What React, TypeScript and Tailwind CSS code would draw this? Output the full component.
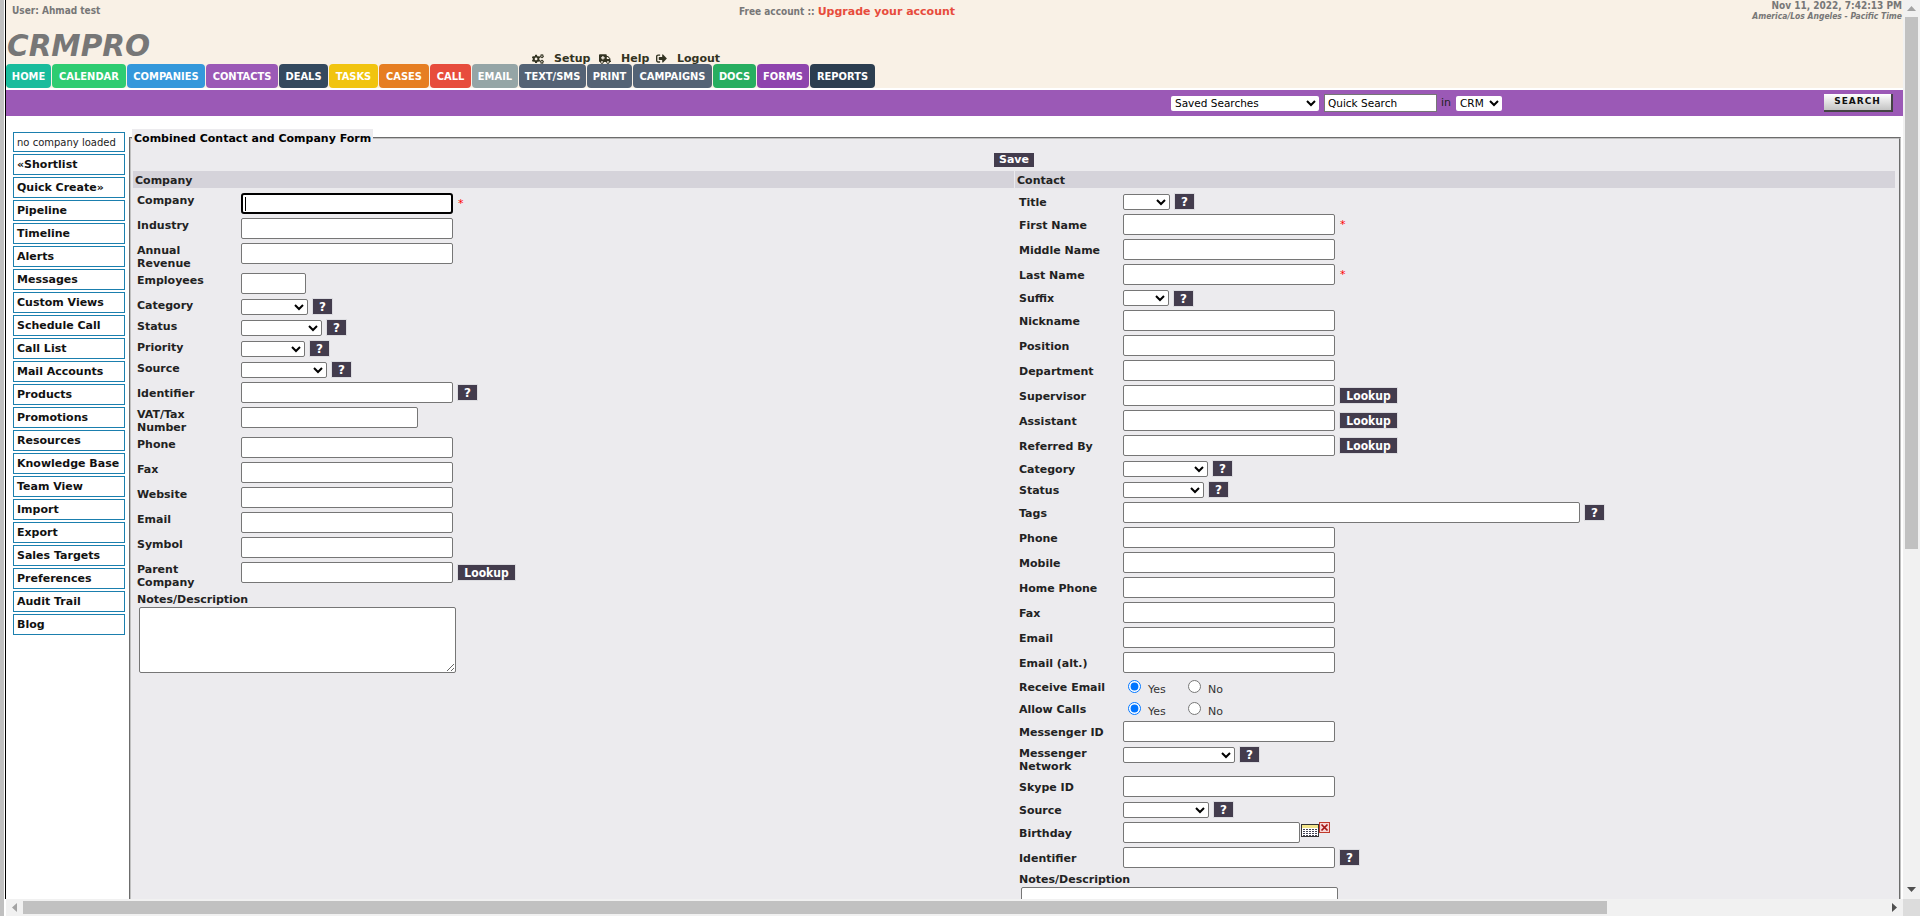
import type { ReactNode } from "react";
import { FaCogs, FaAmbulance, FaSignOutAlt } from "react-icons/fa";

const tabs = [
  { name: "HOME", cls: "w-[45px] bg-[#1abc9c]" },
  { name: "CALENDAR", cls: "w-[74px] bg-[#2ecc71]" },
  { name: "COMPANIES", cls: "w-[78px] bg-[#3498db]" },
  { name: "CONTACTS", cls: "w-[72px] bg-[#9b59b6]" },
  { name: "DEALS", cls: "w-[49px] bg-[#34495e]" },
  { name: "TASKS", cls: "w-[49px] bg-[#f1c40f]" },
  { name: "CASES", cls: "w-[50px] bg-[#e67e22]" },
  { name: "CALL", cls: "w-[41px] bg-[#e74c3c]" },
  { name: "EMAIL", cls: "w-[46px] bg-[#95a5a6]" },
  { name: "TEXT/SMS", cls: "w-[67px] bg-[#546375]" },
  { name: "PRINT", cls: "w-[45px] bg-[#546375]" },
  { name: "CAMPAIGNS", cls: "w-[79px] bg-[#546375]" },
  { name: "DOCS", cls: "w-[43px] bg-[#27ae60]" },
  { name: "FORMS", cls: "w-[52px] bg-[#8e44ad]" },
  { name: "REPORTS", cls: "w-[65px] bg-[#2c3e50]" },
];

const sideItems = [
  "«Shortlist", "Quick Create»", "Pipeline", "Timeline", "Alerts", "Messages", "Custom Views",
  "Schedule Call", "Call List", "Mail Accounts", "Products", "Promotions", "Resources",
  "Knowledge Base", "Team View", "Import", "Export", "Sales Targets", "Preferences", "Audit Trail", "Blog",
];

function Row({ label, h = "h-[25px]", labelCls = "pt-px", children }: { label: ReactNode; h?: string; labelCls?: string; children?: ReactNode }) {
  return (
    <div className={`flex items-start ${h}`}>
      <div className={`w-[104px] shrink-0 pr-2 text-[11px] font-bold leading-[13px] text-[#222] ${labelCls}`}>{label}</div>
      {children}
    </div>
  );
}

// contact rows have their label centred on the input
function CRow({ label, children }: { label: string; children?: ReactNode }) {
  return <Row label={label} labelCls="pt-[5px]">{children}</Row>;
}

function SRow({ label, children }: { label: string; children?: ReactNode }) {
  return <Row label={label} h="h-[21px]" labelCls="pt-[3px]">{children}</Row>;
}

function Field({ w = "w-[212px]" }: { w?: string }) {
  return <input type="text" className={`${w} h-[21px] rounded-[2px] border border-[#767676] bg-white`} />;
}

function Pick({ w }: { w: string }) {
  return (
    <select className={`${w} mt-px h-[16px] rounded-[2px] border border-[#767676] bg-white text-[10px]`}>
      <option></option>
    </select>
  );
}

function Help({ cls = "" }: { cls?: string }) {
  return (
    <span className={`ml-[4px] flex h-[17px] w-[21px] items-center justify-center border border-[#dcdce0] bg-[#433c4d] text-[12px] font-bold text-white ${cls}`}>
      ?
    </span>
  );
}

function Lookup() {
  return (
    <span className="ml-[4px] mt-[2px] flex h-[17px] w-[59px] items-center justify-center border border-[#dcdce0] bg-[#433c4d] font-['DejaVu_Sans_Condensed','Liberation_Sans',sans-serif] text-[12px] font-bold text-white">
      Lookup
    </span>
  );
}

function Req() {
  return <span className="ml-[5px] mt-[4px] text-[11px] leading-[13px] text-[#f00]">*</span>;
}

function YesNo() {
  return (
    <div className="flex items-start text-[11px] leading-[13px] text-[#333]">
      <input type="radio" defaultChecked className="ml-[5px] mt-[3px] h-[13px] w-[13px]" />
      <span className="ml-[7px] mt-[6px] w-[40px]">Yes</span>
      <input type="radio" className="mt-[3px] h-[13px] w-[13px]" />
      <span className="ml-[7px] mt-[6px]">No</span>
    </div>
  );
}

function CalendarIcon() {
  return (
    <svg width="18" height="13" viewBox="0 0 18 13" className="ml-px mt-[2px]">
      <rect x="0.5" y="0.5" width="17" height="12" fill="#fff" stroke="#333" />
      <rect x="1" y="1" width="16" height="3" fill="#f3e58b" />
      <path d="M2 5.5h14M2 7.5h14M2 9.5h14M2 11.5h14" stroke="#445" strokeDasharray="2 1" />
    </svg>
  );
}

function ClearIcon() {
  return (
    <svg width="11" height="11" viewBox="0 0 11 11">
      <rect x="0.5" y="0.5" width="10" height="10" fill="#f6d5d5" stroke="#c0392b" />
      <path d="M2.5 2.5l6 6M8.5 2.5l-6 6" stroke="#a31515" strokeWidth="1.7" />
    </svg>
  );
}

function CompanyForm() {
  return (
    <div className="w-[881px] shrink-0">
      <div className="h-[17px] bg-[#d5d3da] pl-[2px] text-[11px] font-bold leading-[19px] text-[#222]">Company</div>
      <div className="pl-[4px] pt-[5px]">
        <Row label="Company">
          <div className="relative">
            <input type="text" className="block h-[21px] w-[212px] rounded-[3px] border-2 border-black bg-white" />
            <span className="absolute left-[4px] top-[4px] h-[14px] w-px bg-black" />
          </div>
          <Req />
        </Row>
        <Row label="Industry"><Field /></Row>
        <Row label="Annual Revenue" h="h-[30px]"><Field /></Row>
        <Row label="Employees"><Field w="w-[65px]" /></Row>
        <Row label="Category" h="h-[21px]"><Pick w="w-[67px]" /><Help /></Row>
        <Row label="Status" h="h-[21px]"><Pick w="w-[81px]" /><Help /></Row>
        <Row label="Priority" h="h-[21px]"><Pick w="w-[64px]" /><Help /></Row>
        <Row label="Source" h="h-[21px]"><Pick w="w-[86px]" /><Help /></Row>
        <CRow label="Identifier"><Field /><Help cls="mt-[2px]" /></CRow>
        <Row label="VAT/Tax Number" h="h-[30px]"><Field w="w-[177px]" /></Row>
        <Row label="Phone"><Field /></Row>
        <Row label="Fax"><Field /></Row>
        <Row label="Website"><Field /></Row>
        <Row label="Email"><Field /></Row>
        <Row label="Symbol"><Field /></Row>
        <Row label="Parent Company" h="h-[30px]"><Field /><Lookup /></Row>
        <div className="pt-px text-[11px] font-bold leading-[13px] text-[#222]">Notes/Description</div>
        <textarea className="ml-[2px] mt-px block h-[66px] w-[317px] resize rounded-[2px] border border-[#767676] bg-white" />
      </div>
    </div>
  );
}

function ContactForm() {
  return (
    <div className="w-[880px] shrink-0">
      <div className="h-[17px] bg-[#d5d3da] pl-[2px] text-[11px] font-bold leading-[19px] text-[#222]">Contact</div>
      <div className="pl-[4px] pt-[5px]">
        <SRow label="Title"><Pick w="w-[47px]" /><Help /></SRow>
        <CRow label="First Name"><Field /><Req /></CRow>
        <CRow label="Middle Name"><Field /></CRow>
        <CRow label="Last Name"><Field /><Req /></CRow>
        <SRow label="Suffix"><Pick w="w-[46px]" /><Help cls="mt-px" /></SRow>
        <CRow label="Nickname"><Field /></CRow>
        <CRow label="Position"><Field /></CRow>
        <CRow label="Department"><Field /></CRow>
        <CRow label="Supervisor"><Field /><Lookup /></CRow>
        <CRow label="Assistant"><Field /><Lookup /></CRow>
        <CRow label="Referred By"><Field /><Lookup /></CRow>
        <SRow label="Category"><Pick w="w-[85px]" /><Help /></SRow>
        <SRow label="Status"><Pick w="w-[81px]" /><Help /></SRow>
        <CRow label="Tags"><Field w="w-[457px]" /><Help cls="mt-[2px]" /></CRow>
        <CRow label="Phone"><Field /></CRow>
        <CRow label="Mobile"><Field /></CRow>
        <CRow label="Home Phone"><Field /></CRow>
        <CRow label="Fax"><Field /></CRow>
        <CRow label="Email"><Field /></CRow>
        <CRow label="Email (alt.)"><Field /></CRow>
        <Row label="Receive Email" h="h-[22px]" labelCls="pt-[4px]"><YesNo /></Row>
        <Row label="Allow Calls" h="h-[22px]" labelCls="pt-[4px]"><YesNo /></Row>
        <CRow label="Messenger ID"><Field /></CRow>
        <Row label="Messenger Network" h="h-[30px]"><Pick w="w-[112px]" /><Help /></Row>
        <CRow label="Skype ID"><Field /></CRow>
        <SRow label="Source"><Pick w="w-[86px]" /><Help /></SRow>
        <CRow label="Birthday">
          <Field w="w-[177px]" />
          <CalendarIcon />
          <ClearIcon />
        </CRow>
        <CRow label="Identifier"><Field /><Help cls="mt-[2px]" /></CRow>
        <div className="pt-px text-[11px] font-bold leading-[13px] text-[#222]">Notes/Description</div>
        <textarea className="ml-[2px] mt-px block h-[66px] w-[317px] resize rounded-[2px] border border-[#767676] bg-white" />
      </div>
    </div>
  );
}

export default function App() {
  return (
    <div className="flex h-[916px] w-[1920px] overflow-hidden bg-white font-['DejaVu_Sans','Liberation_Sans',sans-serif]">
      {/* frame edge */}
      <div className="w-[4px] shrink-0 bg-[#c0c0c0]" />
      <div className="w-px shrink-0 bg-white" />
      <div className="h-[899px] w-px shrink-0 bg-black" />

      <div className="flex w-[1914px] shrink-0 flex-col">
        <div className="flex h-[899px] shrink-0">
          <div className="w-[1897px] shrink-0 overflow-hidden">
            {/* header */}
            <div className="h-[64px] bg-[#f9f1e6]">
              <div className="flex h-[30px] items-start font-['DejaVu_Sans_Condensed','Liberation_Sans',sans-serif]">
                <div className="mt-[4px] w-[733px] shrink-0 pl-[6px] text-[10px] font-bold leading-[13px] text-[#777]">User: Ahmad test</div>
                <div className="mt-[5px] flex items-baseline text-[10px] font-bold leading-[14px] text-[#777]">
                  <span>Free account ::</span>
                  <span className="ml-[3px] font-['DejaVu_Sans','Liberation_Sans',sans-serif] text-[11px] text-[#e74c3c]">Upgrade your account</span>
                </div>
                <div className="ml-auto text-right font-bold text-[#777]">
                  <div className="text-[10px] leading-[12px]">Nov 11, 2022, 7:42:13 PM</div>
                  <div className="text-[8.5px] italic leading-[9px]">America/Los Angeles - Pacific Time</div>
                </div>
                <div className="w-px shrink-0" />
              </div>
              <div className="flex h-[34px] items-end">
                <div className="w-[526px] shrink-0 pb-[3px] pl-px text-[29.5px] font-bold italic leading-[29px] text-[#777]">CRMPRO</div>
                <div className="-mb-px flex items-center text-[11px] font-bold leading-[13px] text-[#332]">
                  <FaCogs size={12} />
                  <span className="ml-[10px] w-[45px]">Setup</span>
                  <FaAmbulance size={12} />
                  <span className="ml-[10px] w-[35px]">Help</span>
                  <FaSignOutAlt size={11} />
                  <span className="ml-[10px]">Logout</span>
                </div>
              </div>
            </div>

            {/* main nav */}
            <div className="flex h-[24px] gap-px bg-[#f9f1e6]">
              {tabs.map((t) => (
                <div key={t.name} className={`${t.cls} flex items-center justify-center rounded-[4px] pt-[2px] font-['DejaVu_Sans_Condensed','Liberation_Sans',sans-serif] text-[11px] font-bold text-white`}>
                  {t.name}
                </div>
              ))}
            </div>

            {/* search bar */}
            <div className="mt-[2px] flex h-[26px] items-center bg-[#9b59b6] pl-[1165px] pr-[10px] text-[10.5px]">
              <select className="h-[15px] w-[148px] rounded-[2px] bg-white text-[10.5px] text-black">
                <option>Saved Searches</option>
              </select>
              <input type="text" defaultValue="Quick Search" className="ml-[5px] h-[18px] w-[113px] border border-[#767676] bg-white pl-[3px] text-[10.5px] text-black" />
              <span className="ml-[4px] text-[11px] text-[#222]">in</span>
              <select className="ml-[5px] h-[15px] w-[46px] rounded-[2px] bg-white text-[10.5px] text-black">
                <option>CRM</option>
              </select>
              <span className="ml-auto flex h-[18px] w-[69px] items-center justify-center border-b-2 border-r-2 border-[#444] bg-gradient-to-b from-white to-[#c4c4c4] text-[9px] font-bold tracking-[1px] text-[#111]">
                SEARCH
              </span>
            </div>

            <div className="flex items-start">
              {/* left menu */}
              <div className="ml-[7px] mt-[16px] flex w-[112px] shrink-0 flex-col gap-[2px]">
                <div className="h-[20px] border border-[#1b7fae] bg-white pl-[3px] text-[10px] leading-[19px] text-[#222]">no company loaded</div>
                {sideItems.map((s) => (
                  <div key={s} className="h-[21px] border border-[#1b7fae] bg-white pl-[3px] text-[11px] font-bold leading-[20px] text-[#111]">
                    {s}
                  </div>
                ))}
              </div>

              {/* form */}
              <fieldset className="ml-[4px] mt-[13px] h-[900px] w-[1772px] shrink-0 border-2 border-[#c0c0c0] bg-[#ecebee] pl-[2px] pr-[4px] [border-style:groove]">
                <legend className="-ml-px h-[18px] bg-[#ecebee] px-[2px] text-[11px] font-bold leading-[19px] text-black">
                  Combined Contact and Company Form
                </legend>
                <div className="flex h-[24px] justify-center pt-[6px]">
                  <span className="flex h-[14px] w-[40px] items-center justify-center bg-[#433c4d] text-[11px] font-bold text-white">Save</span>
                </div>
                <div className="flex gap-px">
                  <CompanyForm />
                  <ContactForm />
                </div>
              </fieldset>
            </div>
          </div>

          {/* vertical scrollbar */}
          <div className="flex w-[17px] shrink-0 flex-col items-center bg-[#f1f1f1]">
            <svg width="9" height="5" viewBox="0 0 9 5" className="mt-[6px]"><path d="M4.5 0L9 5H0z" fill="#a3a3a3" /></svg>
            <div className="mt-[6px] h-[532px] w-[13px] bg-[#c1c1c1]" />
            <svg width="9" height="5" viewBox="0 0 9 5" className="mb-[7px] mt-auto"><path d="M0 0h9L4.500 5z" fill="#505050" /></svg>
          </div>
        </div>

        {/* horizontal scrollbar */}
        <div className="flex h-[17px] shrink-0">
          <div className="flex w-[1897px] shrink-0 items-center bg-[#f1f1f1] pl-[6px] pr-[6px]">
            <svg width="5" height="9" viewBox="0 0 5 9"><path d="M5 0v9L0 4.500z" fill="#a3a3a3" /></svg>
            <div className="ml-[6px] h-[13px] w-[1584px] bg-[#c1c1c1]" />
            <svg width="5" height="9" viewBox="0 0 5 9" className="ml-auto"><path d="M0 0v9l5-4.500z" fill="#505050" /></svg>
          </div>
          <div className="w-[17px] shrink-0 bg-[#dcdcdc]" />
        </div>
      </div>
    </div>
  );
}
